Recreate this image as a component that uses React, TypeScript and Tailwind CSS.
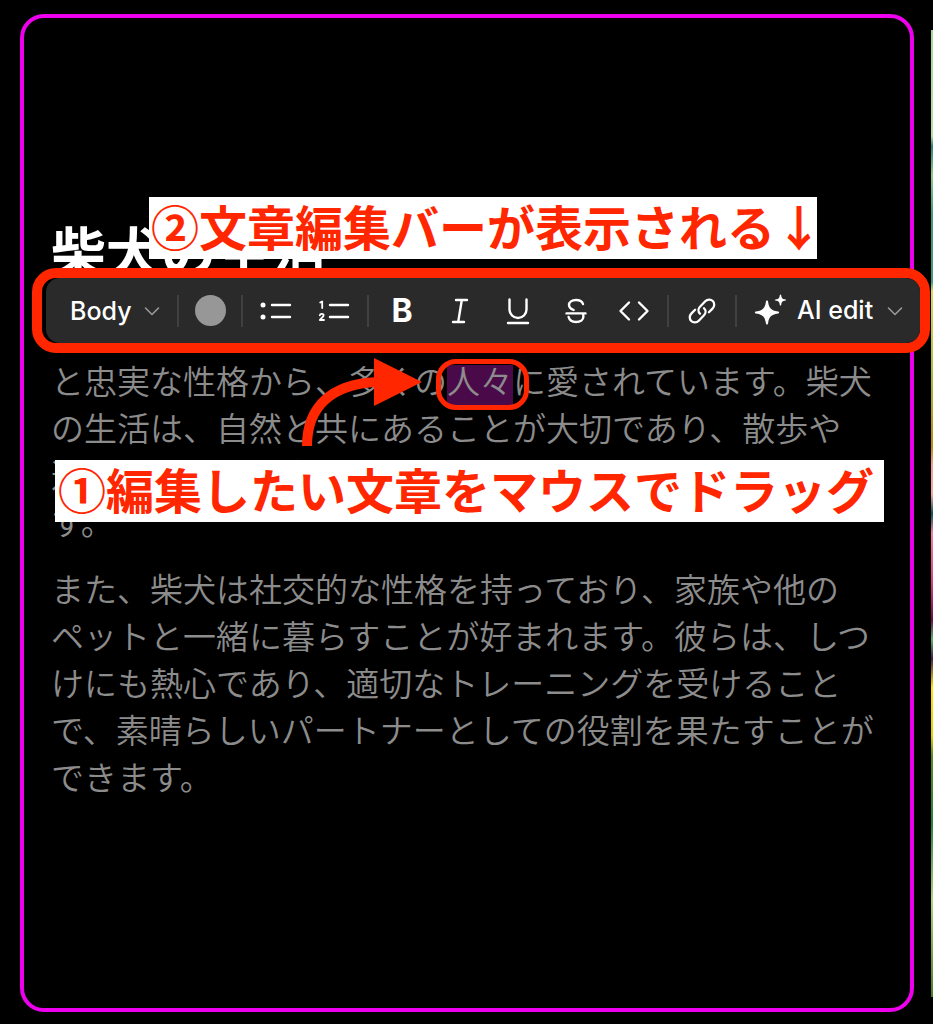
import type { ReactNode } from 'react'

const blockStyles = ['Body', 'Heading 1', 'Heading 2', 'Heading 3']

function Chevron({ className = '' }: { className?: string }) {
  return (
    <svg viewBox="0 0 16 10" className={`w-4 h-[10px] text-[#9a9a9a] ${className}`} fill="none" stroke="currentColor" strokeWidth="1.6" strokeLinecap="round" strokeLinejoin="round" aria-hidden="true">
      <path d="M1.5 2 8 8.500 14.500 2" />
    </svg>
  )
}

function Icon({ children }: { children: ReactNode }) {
  return (
    <svg viewBox="0 0 32 32" className="size-8" fill="none" stroke="currentColor" strokeWidth="2.4" strokeLinecap="round" strokeLinejoin="round" aria-hidden="true">
      {children}
    </svg>
  )
}

function ToolButton({ label, children }: { label: string; children: ReactNode }) {
  return (
    <button type="button" aria-label={label} className="w-[58px] h-12 flex items-center justify-center">
      {children}
    </button>
  )
}

function Divider() {
  return <div className="w-[2px] h-8 bg-[#404040] shrink-0" />
}

function Toolbar() {
  return (
    <div role="toolbar" aria-label="Text formatting" className="h-full flex items-center rounded-[14px] bg-[#2a2a2a] text-white">
      <label className="relative flex items-center w-[131px] shrink-0">
        <select aria-label="Text style" defaultValue="Body" className="appearance-none w-full h-12 pl-6 pt-[2px] bg-transparent text-[25px] font-medium outline-none">
          {blockStyles.map((style) => (
            <option key={style}>{style}</option>
          ))}
        </select>
        <Chevron className="absolute right-[17px] pointer-events-none" />
      </label>
      <Divider />
      <button type="button" aria-label="Text color" className="w-[62px] h-12 flex items-center justify-center">
        <span className="size-[31px] rounded-full bg-[#979797]" />
      </button>
      <Divider />
      <div className="flex px-1">
        <ToolButton label="Bulleted list">
          <Icon>
            <circle cx="3" cy="10" r="2.5" fill="currentColor" stroke="none" />
            <circle cx="3" cy="22" r="2.5" fill="currentColor" stroke="none" />
            <path d="M12 10h18M12 22h18" />
          </Icon>
        </ToolButton>
        <ToolButton label="Numbered list">
          <Icon>
            <path d="M12 10h18M12 22h18" />
            <path strokeWidth="1.8" d="M2.2 7.6 4.2 6.4V13M1.8 20.4c.3-2.2 4-2 3.8 0-.1 1.6-2.4 2.6-3.8 4.6h4.2" />
          </Icon>
        </ToolButton>
      </div>
      <Divider />
      <div className="flex px-1">
        <ToolButton label="Bold">
          <span className="text-[32px] leading-8 font-bold">B</span>
        </ToolButton>
        <ToolButton label="Italic">
          <Icon>
            <path strokeWidth="2.4" d="M12 5h11M9 27h11M17.8 5l-3.6 22" />
          </Icon>
        </ToolButton>
        <ToolButton label="Underline">
          <Icon>
            <path strokeWidth="2.4" d="M7.500 4.500v10a8.500 8.500 0 0 0 17 0v-10M6 28h20" />
          </Icon>
        </ToolButton>
        <ToolButton label="Strikethrough">
          <Icon>
            <path strokeWidth="2.4" d="M23 9c-.8-2.600-3.400-4-7-4-4.200 0-7 2-7 5 0 2.400 1.600 3.800 4.600 5M8.600 22c.8 3 3.400 5 7.400 5 4.400 0 7.400-2.200 7.400-5.600 0-1.200-.3-2.200-.9-3M6.500 18.400h19" />
          </Icon>
        </ToolButton>
        <ToolButton label="Code">
          <Icon>
            <path d="M11 7.500 2.500 16l8.500 8.500M21 7.500l8.500 8.500-8.500 8.500" />
          </Icon>
        </ToolButton>
      </div>
      <Divider />
      <div className="flex px-1">
        <ToolButton label="Link">
          <Icon>
            <path strokeWidth="2.300" d="M14 18.800c-2-2-2-5.100 0-7.100l5.200-5.400c2.200-2.200 5.600-2.300 7.600-.3s1.900 5.400-.3 7.600l-3.600 3.600" />
            <path strokeWidth="2.300" d="M18 13.200c2 2 2 5.100 0 7.100l-5.200 5.400c-2.200 2.200-5.600 2.300-7.600.3s-1.900-5.400.3-7.600l3.600-3.600" />
          </Icon>
        </ToolButton>
      </div>
      <Divider />
      <button type="button" className="flex-1 h-12 flex items-center justify-between px-[17px] text-[25px] font-medium whitespace-nowrap">
        <span className="flex items-center gap-[9px]">
          <svg viewBox="0 0 34 34" className="size-[34px]" fill="currentColor" aria-hidden="true">
            <path d="M13 6.500c.7 0 1 .5 1.100 1.200.9 6.300 2.600 8.600 10 9.800 1.400.2 1.400 1.800 0 2-7.400 1.200-9.100 3.500-10 9.800-.2 1.600-2 1.600-2.200 0-.9-6.300-2.600-8.600-10-9.800-1.400-.2-1.400-1.800 0-2 7.400-1.200 9.100-3.500 10-9.800.1-.7.400-1.200 1.100-1.200z" />
            <path d="M26.500.5c.4 0 .6.300.7.700.4 3 1.200 3.900 4.300 4.300.8.100.8 1 0 1.100-3.100.4-3.900 1.300-4.300 4.300-.1.900-1.300.9-1.400 0-.4-3-1.200-3.900-4.300-4.300-.8-.1-.8-1 0-1.100 3.100-.4 3.900-1.300 4.300-4.300.1-.4.300-.7.700-.7z" />
          </svg>
          AI edit
        </span>
        <Chevron />
      </button>
    </div>
  )
}

function Callout({ className, children }: { className: string; children: ReactNode }) {
  return (
    <p className={`absolute h-[62px] leading-[56px] bg-white text-[#ff2600] text-[48px] font-bold whitespace-nowrap ${className}`}>
      {children}
    </p>
  )
}

export default function App() {
  return (
    <div className="min-h-screen bg-black flex pt-[14px] pb-3 pl-5 overflow-hidden font-['Inter','Noto_Sans_CJK_JP',sans-serif]">
      <main className="flex-1 min-w-0 mr-[17px] border-4 border-[#ee00ee] rounded-[24px] px-[27px] flex flex-col justify-center">
        <article lang="ja" className="relative pb-1 font-['Noto_Sans_CJK_JP',sans-serif]">
          <h1 className="text-[55px] leading-[54px] font-bold text-white mb-[34px]">柴犬の生活</h1>
          <div className="space-y-5 text-[33px] leading-[47px] font-[350] text-[#8c8c8c] whitespace-nowrap">
            <p>
              柴犬は、日本原産の犬種のひとつです。愛らしい外見
              <br />
              と忠実な性格から、多くの
              <mark className="relative inline-block h-10 -mb-1 leading-[30px] bg-[#4a0a4a] text-inherit">
                人々
                <span className="absolute -left-[11px] -right-4 -top-[6px] -bottom-[5px] border-[5px] border-[#ff2600] rounded-[20px]" />
              </mark>
              に愛されています。柴犬
              <br />
              の生活は、自然と共にあることが大切であり、散歩や
              <br />
              運動を通じて心身の健康を保つことが必要とされていま
              <br />
              す。
            </p>
            <p>
              また、柴犬は社交的な性格を持っており、家族や他の
              <br />
              ペットと一緒に暮らすことが好まれます。彼らは、しつ
              <br />
              けにも熱心であり、適切なトレーニングを受けること
              <br />
              で、素晴らしいパートナーとしての役割を果たすことが
              <br />
              できます。
            </p>
          </div>

          {/* Annotations over the document */}
          <Callout className="left-[98px] -top-[25px] w-[668px] pl-[2px]">②文章編集バーが表示される↓</Callout>
          <div className="absolute top-[46px] -left-[19px] -right-[47px] h-[85px] border-[10px] border-[#ff2600] rounded-[24px] bg-black pl-1 font-['Inter',sans-serif]">
            <Toolbar />
          </div>
          <svg viewBox="0 0 122 92" className="absolute left-[250px] top-[135px] w-[122px] h-[92px]" aria-hidden="true">
            <path d="M6 89C6 50 30 27 76 25" fill="none" stroke="#ff2600" strokeWidth="10" />
            <path d="M73 1v48l48-24z" fill="#ff2600" />
          </svg>
          <Callout className="left-1 top-[238px] pl-[3px] pr-[10px]">①編集したい文章をマウスでドラッグ</Callout>
        </article>
      </main>

      {/* Edge of the next card */}
      <aside className="w-[2px] mt-4 mb-[15px] bg-[linear-gradient(#a6d796_0%,#b4de9c_11%,#2f8078_12%,#8fc98a_15%,#3d9c80_19%,#3d9c80_26%,#d8d860_27%,#a8b83a_36%,#b98a10_43%,#f59a98_45%,#f5a8a0_48%,#0b5358_50%,#f080a0_52%,#d84080_57%,#6a1050_61%,#58b070_63%,#402048_65%,#ffe000_68%,#e0d000_73%,#5a8a20_75%,#2a8040_82%,#b0d080_90%,#4a7a28_100%)]" />
    </div>
  )
}
